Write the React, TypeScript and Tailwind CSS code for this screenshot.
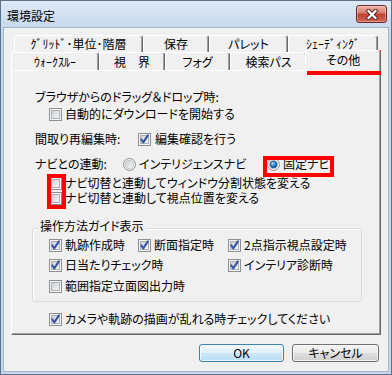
import React from "react";

const font =
  "font-['Noto_Sans_CJK_JP','Noto_Sans',sans-serif] [font-feature-settings:'palt']";

function CheckBox({ checked = false }: { checked?: boolean }) {
  return (
    <svg width="13" height="13" viewBox="0 0 13 13" className="shrink-0 block">
      <defs>
        <linearGradient id="cbfill" x1="0" y1="0" x2="1" y2="1">
          <stop offset="0" stopColor="#c8ccd2" />
          <stop offset="1" stopColor="#f9f9f9" />
        </linearGradient>
      </defs>
      <rect x="0.5" y="0.5" width="12" height="12" fill="#f5f5f5" stroke="#8e8f8f" />
      <rect x="2.5" y="2.5" width="8" height="8" fill="url(#cbfill)" stroke="#aab0b7" />
      {checked && (
        <path
          d="M3.2 6.3 L5.3 9.4 L9.9 2.4"
          fill="none"
          stroke="#3a52a2"
          strokeWidth="2"
          strokeLinecap="round"
          strokeLinejoin="round"
        />
      )}
    </svg>
  );
}

function Radio({ checked = false }: { checked?: boolean }) {
  return (
    <svg width="13" height="13" viewBox="0 0 13 13" className="shrink-0 block">
      <defs>
        <linearGradient id="rbfill" x1="0" y1="0" x2="1" y2="1">
          <stop offset="0" stopColor="#c8ccd2" />
          <stop offset="1" stopColor="#f9f9f9" />
        </linearGradient>
        <radialGradient id="rbdot" cx="0.4" cy="0.35" r="0.7">
          <stop offset="0" stopColor="#a8e2ff" />
          <stop offset="0.5" stopColor="#2a8ad4" />
          <stop offset="1" stopColor="#0b3f77" />
        </radialGradient>
      </defs>
      <circle cx="6.5" cy="6.5" r="6" fill="#f5f5f5" stroke="#8e8f8f" />
      <circle cx="6.5" cy="6.5" r="4.2" fill="url(#rbfill)" stroke="#b3b8be" strokeWidth="0.8" />
      {checked && (
        <circle cx="6.5" cy="6.5" r="3.4" fill="url(#rbdot)" stroke="#1b4a80" strokeWidth="0.6" />
      )}
    </svg>
  );
}

const tabBase =
  "h-full flex items-center justify-center border-t border-l border-r border-t-white border-l-white border-r-[#696969] shadow-[inset_-1px_0_0_#a0a0a0] rounded-t-[3px] bg-[#f0f0f0]";

export default function App() {
  return (
    <div
      className={`${font} relative w-[392px] h-[375px] bg-[#c9d9ed] border border-[#5d7189] flex flex-col text-[12px] leading-[14px] text-black`}
    >
      {/* Title bar */}
      <div className="h-[26px] shrink-0 flex items-start justify-between bg-gradient-to-b from-[#dde9f7] to-[#c8d9ee]">
        <span className="ml-[6px] mt-[8px] text-[12px] leading-[14px]">環境設定</span>
        <div className="mt-[4px] mr-[4px] w-[31px] h-[18px] rounded-[3px] border border-[#6e2a22] bg-[linear-gradient(#eab0a4,#d77a6a_45%,#c2402f_50%,#cf6450)] flex items-center justify-center shadow-[inset_0_0_0_1px_rgba(255,255,255,0.35)]">
          <svg width="14" height="11" viewBox="0 0 14 11">
            <path d="M3.5 2 L10.5 9 M10.5 2 L3.5 9" stroke="#4a2520" strokeWidth="4" strokeLinecap="square" />
            <path d="M3.5 2 L10.5 9 M10.5 2 L3.5 9" stroke="#ffffff" strokeWidth="2.2" strokeLinecap="square" />
          </svg>
        </div>
      </div>

      {/* Client area */}
      <div className="flex-1 mx-[2px] mb-[2px] bg-[#f0f0f0] border border-[#a3b4c7] flex flex-col">
        {/* Tabs */}
        <div className="pt-[7px] h-[42px] shrink-0 flex flex-col">
          <div className="flex ml-[10px] h-[17px]">
            <div className={`${tabBase} w-[129px]`}>ｸﾞﾘｯﾄﾞ･単位･階層</div>
            <div className={`${tabBase} w-[66px]`}>保存</div>
            <div className={`${tabBase} w-[79px]`}>パレット</div>
            <div className={`${tabBase} w-[90px]`}>ｼｪｰﾃﾞｨﾝｸﾞ</div>
          </div>
          <div className="flex ml-[7px] h-[18px] items-start">
            <div className={`${tabBase} w-[88px]`}>ｳｫｰｸｽﾙｰ</div>
            <div className={`${tabBase} w-[66px]`}>視　界</div>
            <div className={`${tabBase} w-[65px]`}>フォグ</div>
            <div className={`${tabBase} w-[77px]`}>検索パス</div>
            <div className="relative z-10 -mt-[2px] -ml-[2px] w-[76px] h-[21px] flex items-start justify-center pt-[2px] border-t border-l border-r border-t-white border-l-white border-r-[#696969] shadow-[inset_-1px_0_0_#a0a0a0] rounded-t-[3px] bg-[#f0f0f0]">
              その他
            </div>
          </div>
        </div>

        {/* Panel */}
        <div className="ml-[7px] w-[370px] h-[265px] shrink-0 border-t border-l border-r border-b border-t-white border-l-white border-r-[#696969] border-b-[#696969] shadow-[inset_-1px_-1px_0_#a0a0a0] flex flex-col pl-[23px]">
          <div className="mt-[19px] h-[14px] flex items-center">ブラウザからのドラッグ＆ドロップ時:</div>
          <div className="mt-[3px] h-[14px] flex items-center gap-[3px] pl-[14px]">
            <CheckBox />
            <span>自動的にダウンロードを開始する</span>
          </div>
          <div className="mt-[11px] h-[14px] flex items-center">
            <span className="w-[103px] shrink-0">間取り再編集時:</span>
            <CheckBox checked />
            <span className="ml-[4px]">編集確認を行う</span>
          </div>
          <div className="mt-[11px] h-[14px] flex items-center">
            <span className="w-[88px] shrink-0">ナビとの連動:</span>
            <div className="w-[144px] flex items-center gap-[3px] shrink-0">
              <Radio />
              <span>インテリジェンスナビ</span>
            </div>
            <div className="flex items-center gap-[3px]">
              <Radio checked />
              <span>固定ナビ</span>
            </div>
          </div>
          <div className="mt-[5px] h-[14px] flex items-center gap-[3px] pl-[14px]">
            <CheckBox />
            <span>ナビ切替と連動してウィンドウ分割状態を変える</span>
          </div>
          <div className="mt-[1px] h-[14px] flex items-center gap-[3px] pl-[14px]">
            <CheckBox />
            <span>ナビ切替と連動して視点位置を変える</span>
          </div>

          {/* Group box */}
          <div className="relative mt-[23px] -ml-[3px] w-[330px] border border-[#d5dfe5] rounded-[3px] pt-[9px] pb-[8px] pl-[16px] flex flex-col shadow-[inset_1px_1px_0_#ffffff]">
            <span className="absolute -top-[10px] left-[5px] px-[2px] bg-[#f0f0f0]">操作方法ガイド表示</span>
            <div className="h-[14px] flex items-center">
              <div className="w-[89px] flex items-center gap-[3px]">
                <CheckBox checked />
                <span>軌跡作成時</span>
              </div>
              <div className="w-[90px] flex items-center gap-[3px]">
                <CheckBox checked />
                <span>断面指定時</span>
              </div>
              <div className="flex items-center gap-[3px]">
                <CheckBox checked />
                <span>2点指示視点設定時</span>
              </div>
            </div>
            <div className="mt-[6px] h-[14px] flex items-center">
              <div className="w-[179px] flex items-center gap-[3px]">
                <CheckBox checked />
                <span>日当たりチェック時</span>
              </div>
              <div className="flex items-center gap-[3px]">
                <CheckBox checked />
                <span>インテリア診断時</span>
              </div>
            </div>
            <div className="mt-[7px] h-[14px] flex items-center gap-[3px]">
              <CheckBox />
              <span>範囲指定立面図出力時</span>
            </div>
          </div>

          <div className="mt-[10px] h-[14px] flex items-center gap-[3px] pl-[14px]">
            <CheckBox checked />
            <span>カメラや軌跡の描画が乱れる時チェックしてください</span>
          </div>
        </div>

        {/* Buttons */}
        <div className="mt-[9px] flex justify-end gap-[8px] pr-[9px]">
          <button className="w-[85px] h-[18px] rounded-[3px] border border-[#3c7fb1] bg-[linear-gradient(#eef7fd,#e1f1fb_50%,#cbe8fa_50%,#b9dff6)] shadow-[inset_0_0_0_1px_rgba(255,255,255,0.7)] flex items-center justify-center text-[12px] leading-[14px]">
            OK
          </button>
          <button className="w-[87px] h-[18px] rounded-[3px] border border-[#707070] bg-[linear-gradient(#f2f2f2,#ebebeb_50%,#dddddd_50%,#cfcfcf)] shadow-[inset_0_0_0_1px_rgba(255,255,255,0.7)] flex items-center justify-center text-[12px] leading-[14px]">
            キャンセル
          </button>
        </div>
      </div>

      {/* Red annotation boxes */}
      <div className="absolute left-[306px] top-[49px] w-[74px] h-[25px] border-[4px] border-[#ff0000] pointer-events-none" />
      <div className="absolute left-[262px] top-[155px] w-[71px] h-[21px] border-[4px] border-[#ff0000] pointer-events-none" />
      <div className="absolute left-[46px] top-[173px] w-[19px] h-[35px] border-[4px] border-[#ff0000] pointer-events-none" />
    </div>
  );
}
